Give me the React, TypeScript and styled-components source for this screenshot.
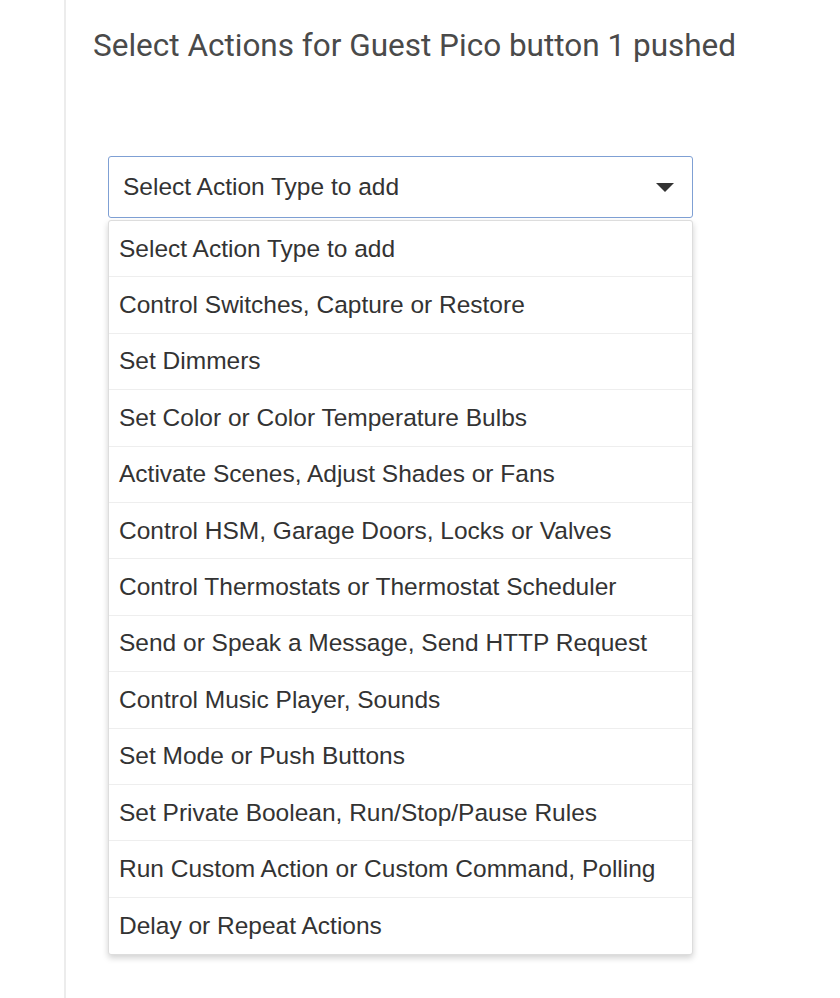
import React from "react"
import styled, { createGlobalStyle } from "styled-components"

const GlobalStyle = createGlobalStyle`
  html, body { margin: 0; padding: 0; background: #fff; }
`

const actions = [
  "Select Action Type to add",
  "Control Switches, Capture or Restore",
  "Set Dimmers",
  "Set Color or Color Temperature Bulbs",
  "Activate Scenes, Adjust Shades or Fans",
  "Control HSM, Garage Doors, Locks or Valves",
  "Control Thermostats or Thermostat Scheduler",
  "Send or Speak a Message, Send HTTP Request",
  "Control Music Player, Sounds",
  "Set Mode or Push Buttons",
  "Set Private Boolean, Run/Stop/Pause Rules",
  "Run Custom Action or Custom Command, Polling",
  "Delay or Repeat Actions",
]

export default function App() {
  return (
    <>
      <GlobalStyle />
      <Page>
        <Panel>
          <Title>Select Actions for Guest Pico button 1 pushed</Title>
          <SelectBox>
            <SelectText>Select Action Type to add</SelectText>
            <Caret />
          </SelectBox>
          <Menu>
            {actions.map((a, i) => (
              <Item key={a} last={i === actions.length - 1}>
                {a}
              </Item>
            ))}
          </Menu>
        </Panel>
      </Page>
    </>
  )
}

const Page = styled.div`
  width: 840px;
  height: 998px;
  padding-left: 64px;
  box-sizing: border-box;
  overflow: hidden;
`

const Panel = styled.div`
  height: 100%;
  border-left: 2px solid #ececec;
  padding: 26px 0 0 27px;
  box-sizing: border-box;
`

const Title = styled.h1`
  margin: 0 0 90px;
  font-family: Roboto, sans-serif;
  font-weight: 400;
  font-size: 31.5px;
  line-height: 40px;
  color: #4a4a4a;
`

const SelectBox = styled.div`
  margin-left: 15px;
  width: 585px;
  height: 62px;
  box-sizing: border-box;
  border: 1.5px solid #7fa0d4;
  border-radius: 3px;
  display: flex;
  align-items: center;
  justify-content: space-between;
  padding: 0 18px 0 14px;
`

const SelectText = styled.span`
  font-family: "Liberation Sans", Arial, sans-serif;
  font-size: 24.5px;
  color: #333;
`

const Caret = styled.span`
  width: 0;
  height: 0;
  border-left: 9px solid transparent;
  border-right: 9px solid transparent;
  border-top: 9px solid #333;
`

const Menu = styled.div`
  margin: 2px 0 0 15px;
  width: 585px;
  box-sizing: border-box;
  border: 1px solid #ddd;
  border-radius: 3px;
  box-shadow: 0 3px 6px rgba(0, 0, 0, 0.18);
  background: #fff;
`

const Item = styled.div<{ last?: boolean }>`
  height: 56.4px;
  box-sizing: border-box;
  display: flex;
  align-items: center;
  padding-left: 10px;
  border-bottom: ${p => (p.last ? "none" : "1px solid #eee")};
  font-family: "Liberation Sans", Arial, sans-serif;
  font-size: 24.5px;
  color: #333;
`
